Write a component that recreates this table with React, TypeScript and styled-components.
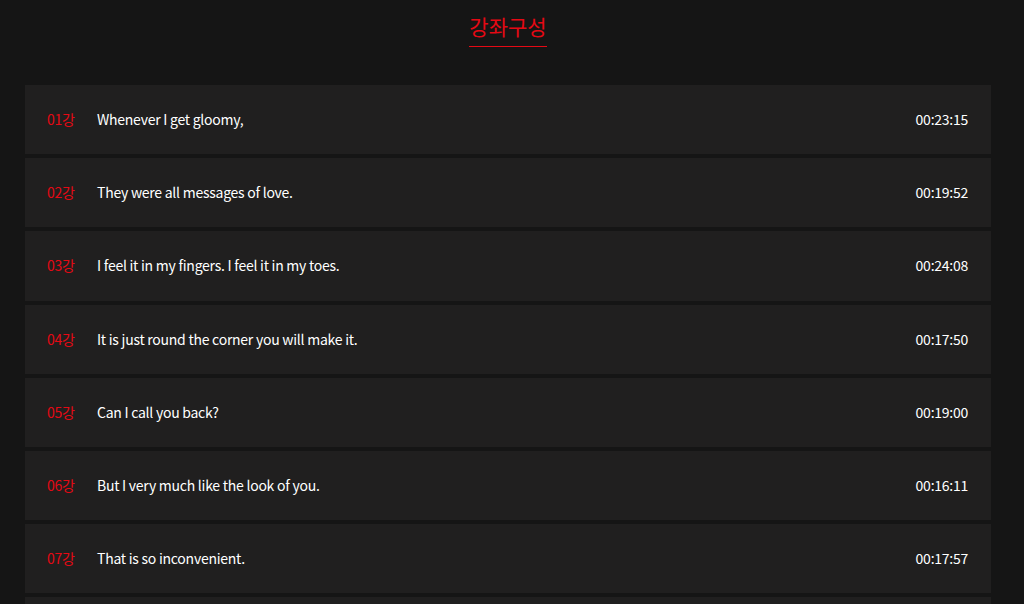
import React from 'react';
import styled, { createGlobalStyle } from 'styled-components';

const COLORS = {
  page: '#151515',
  row: '#201f1f',
  accent: '#e50914',
  text: '#ffffff',
};

interface ILecture {
  no: string;
  title: string;
  time: string;
}

const LECTURES: ILecture[] = [
  { no: '01', title: 'Whenever I get gloomy,', time: '00:23:15' },
  { no: '02', title: 'They were all messages of love.', time: '00:19:52' },
  { no: '03', title: 'I feel it in my fingers. I feel it in my toes.', time: '00:24:08' },
  { no: '04', title: 'It is just round the corner you will make it.', time: '00:17:50' },
  { no: '05', title: 'Can I call you back?', time: '00:19:00' },
  { no: '06', title: 'But I very much like the look of you.', time: '00:16:11' },
  { no: '07', title: 'That is so inconvenient.', time: '00:17:57' },
  { no: '08', title: 'Thank you for everything.', time: '00:18:20' },
];

const GlobalStyle = createGlobalStyle`
  html, body {
    margin: 0;
    padding: 0;
    background: ${COLORS.page};
    font-family: 'Noto Sans CJK KR', 'Noto Sans', sans-serif;
    overflow: hidden;
  }

  *, *::before, *::after {
    box-sizing: border-box;
  }
`;

const StyledSection = styled.section`
  padding: 0 33px 0 25px;
  height: 604px;
  overflow: hidden;
`;

const StyledHeader = styled.header`
  display: flex;
  justify-content: center;
  padding-top: 11px;
  margin-bottom: 38px;
`;

const StyledHeading = styled.h2`
  margin: 0;
  padding-bottom: 4px;
  border-bottom: 1px solid ${COLORS.accent};
  color: ${COLORS.accent};
  font-size: 21px;
  font-weight: 400;
  line-height: 31px;
`;

const StyledList = styled.ul`
  list-style: none;
  margin: 0;
  padding: 0;
  display: flex;
  flex-direction: column;
  row-gap: 4px;
`;

const StyledItem = styled.li`
  display: flex;
  align-items: center;
  height: 69.2px;
  padding: 0 23px 1px 22px;
  background: ${COLORS.row};
  font-size: 14px;
  line-height: 20px;
  letter-spacing: -0.25px;
`;

const StyledNumber = styled.span`
  width: 50px;
  flex-shrink: 0;
  color: ${COLORS.accent};
`;

const StyledTitle = styled.span`
  flex: 1;
  color: ${COLORS.text};
`;

const StyledTime = styled.span`
  color: ${COLORS.text};
`;

export default function App() {
  return (
    <>
      <GlobalStyle />
      <StyledSection>
        <StyledHeader>
          <StyledHeading>강좌구성</StyledHeading>
        </StyledHeader>
        <StyledList>
          {LECTURES.map((lecture) => (
            <StyledItem key={lecture.no}>
              <StyledNumber>{lecture.no}강</StyledNumber>
              <StyledTitle>{lecture.title}</StyledTitle>
              <StyledTime>{lecture.time}</StyledTime>
            </StyledItem>
          ))}
        </StyledList>
      </StyledSection>
    </>
  );
}
